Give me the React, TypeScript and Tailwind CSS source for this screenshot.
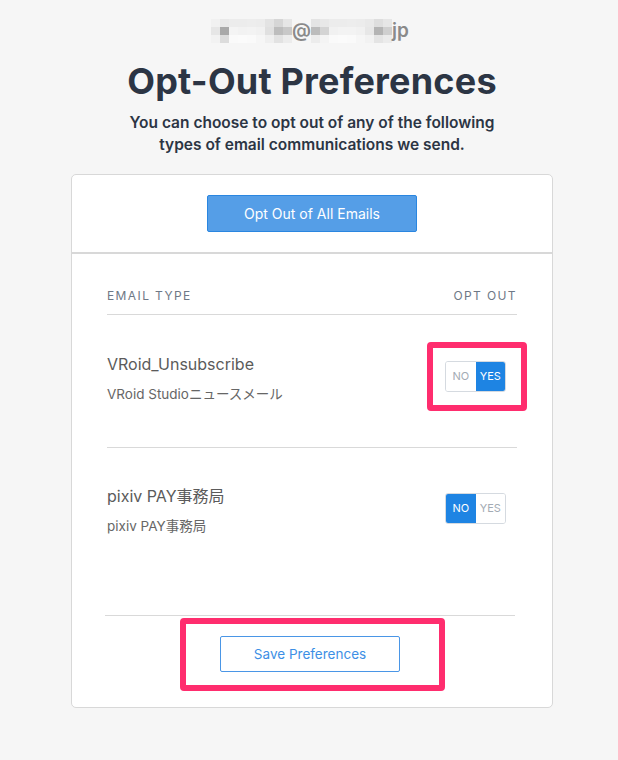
const font = { fontFamily: '"Inter", "Noto Sans CJK JP", sans-serif' };

// pixelated (mosaic) email address
const leftCells = [
  ["#f1f1f1", "#e9e9e9", "#ececec", "#ececec", "#ededed", "#ececec", "#e3e3e3", "#d6d6d6", "#e6e6e6"],
  ["#e6e6e6", "#a9a9a9", "#f4f4f4", "#f2f2f2", "#f3f3f3", "#f1f1f1", "#e0e0e0", "#bdbdbd", "#c8c8c8"],
  ["#f2f2f2", "#dcdcdc", "#fafafa", "#fbfbfb", "#fafafa", "#f6f6f6", "#efefef", "#e2e2e2", "#ececec"],
];
const rightCells = [
  ["#e4e4e4", "#e8e8e8", "#ececec", "#ececec", "#ededed", "#ececec", "#e9e9e9", "#dedede", "#e6e6e6"],
  ["#bcbcbc", "#d4d4d4", "#f1f1f1", "#f3f3f3", "#f3f3f3", "#f1f1f1", "#e7e7e7", "#b4b4b4", "#cfcfcf"],
  ["#ececec", "#f4f4f4", "#fafafa", "#fbfbfb", "#fafafa", "#f6f6f6", "#f2f2f2", "#e4e4e4", "#ebebeb"],
];

function Mosaic({ cells }: { cells: string[][] }) {
  return (
    <div className="flex flex-col">
      {cells.map((row, i) => (
        <div key={i} className="flex">
          {row.map((c, j) => (
            <div key={j} className="w-[9px] h-[8px]" style={{ backgroundColor: c }} />
          ))}
        </div>
      ))}
    </div>
  );
}

function Toggle({ yes, highlight }: { yes: boolean; highlight?: boolean }) {
  return (
    <div className="relative">
      <div className="flex h-[31px] w-[61px] rounded-[3px] border border-[#d5dae0] overflow-hidden text-[11px]">
        <div
          className={
            yes
              ? "flex-1 flex items-center justify-center text-[#a3abb4] bg-white"
              : "flex-1 flex items-center justify-center text-white bg-[#1e84e3]"
          }
        >
          NO
        </div>
        <div
          className={
            yes
              ? "flex-1 flex items-center justify-center text-white bg-[#1e84e3]"
              : "flex-1 flex items-center justify-center text-[#a3abb4] bg-white"
          }
        >
          YES
        </div>
      </div>
      {highlight && (
        <div className="absolute -left-[18px] -right-[21px] -top-[19px] -bottom-[19px] border-[6px] border-[#ff2d6e] rounded-[4px]" />
      )}
    </div>
  );
}

function Row({ title, sub, yes, highlight, border }: { title: string; sub: string; yes: boolean; highlight?: boolean; border?: boolean }) {
  return (
    <div className={border ? "flex justify-between items-start pt-[38px] pb-[43px] border-b border-[#d9d9d9]" : "flex justify-between items-start pt-[37px] pb-[79px]"}>
      <div className="flex flex-col">
        <div className="text-[16px] leading-[22px] text-[#5b5b5b]">{title}</div>
        <div className="mt-[9px] text-[13.5px] leading-[20px] text-[#666666]">{sub}</div>
      </div>
      <div className="mt-[8px] mr-[11px]">
        <Toggle yes={yes} highlight={highlight} />
      </div>
    </div>
  );
}

export default function App() {
  return (
    <div className="min-h-[760px] bg-[#f6f6f6] pl-[6px] pt-[19px] flex flex-col items-center" style={font}>
      {/* email (mosaic) */}
      <div className="flex items-center h-[24px] -ml-[4px]">
        <Mosaic cells={leftCells} />
        <span className="text-[19px] font-semibold text-[#8a8a8a] leading-[24px]">@</span>
        <Mosaic cells={rightCells} />
        <span className="text-[19px] font-semibold text-[#8a8a8a] leading-[24px]">jp</span>
      </div>

      <h1 className="mt-[16px] text-[36px] leading-[44px] font-bold text-[#2c3544] tracking-[0.2px]">Opt-Out Preferences</h1>
      <p className="mt-[9px] text-center text-[15.5px] leading-[22px] font-semibold text-[#2c3544]">
        You can choose to opt out of any of the following
        <br />
        types of email communications we send.
      </p>

      {/* card */}
      <div className="mt-[18px] w-[482px] bg-white border border-[#d8d8d8] rounded-[5px]">
        <div className="flex justify-center pt-[20px] pb-[20px] border-b-2 border-[#d8d8d8]">
          <button className="w-[210px] h-[37px] bg-[#559ee7] border border-[#2a86e0] rounded-[2px] text-white text-[14px]">
            Opt Out of All Emails
          </button>
        </div>

        <div className="px-[35px]">
          <div className="flex justify-between pt-[33px] pb-[9px] border-b border-[#d9d9d9] text-[12px] leading-[18px] tracking-[1.4px] text-[#6e7886]">
            <span>EMAIL TYPE</span>
            <span>OPT OUT</span>
          </div>
          <Row title="VRoid_Unsubscribe" sub="VRoid Studioニュースメール" yes highlight border />
          <Row title="pixiv PAY事務局" sub="pixiv PAY事務局" yes={false} />
        </div>

        <div className="ml-[33px] mr-[37px] border-t border-[#d9d9d9] flex justify-center pt-[20px] pb-[35px]">
          <div className="relative">
            <button className="w-[180px] h-[36px] bg-white border border-[#4a96e6] rounded-[2px] text-[#3d8fe5] text-[13.5px]">
              Save Preferences
            </button>
            <div className="absolute -left-[40px] -right-[45px] -top-[18px] -bottom-[19px] border-[6px] border-[#ff2d6e] rounded-[4px]" />
          </div>
        </div>
      </div>
    </div>
  );
}
